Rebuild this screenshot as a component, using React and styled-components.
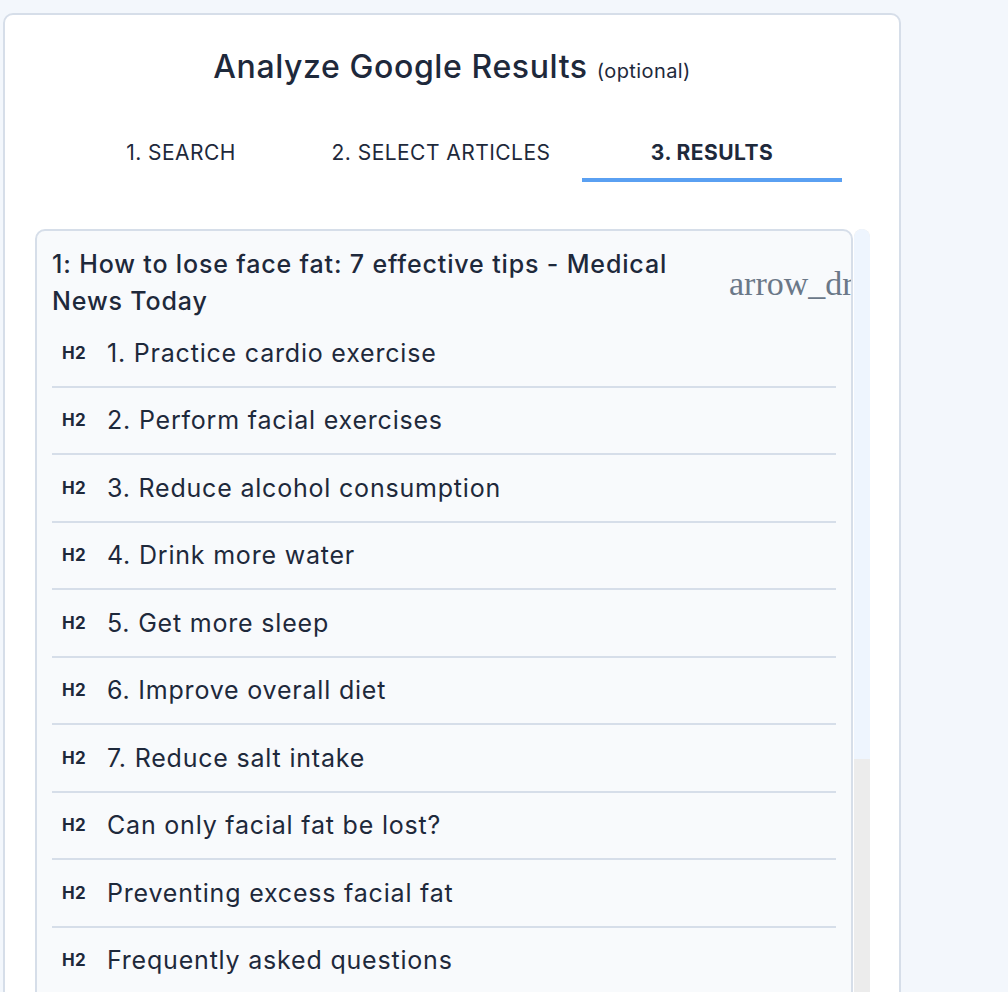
import React from "react";
import styled, { createGlobalStyle } from "styled-components";

const Global = createGlobalStyle`
  html, body { margin: 0; padding: 0; }
  body {
    background: #f3f7fc;
    font-family: "Inter", "Open Sans", sans-serif;
    color: #1e293b;
    overflow: hidden;
  }
`;

const Page = styled.div`
  padding: 13px 0 0 3px;
  height: 979px;
  overflow: hidden;
`;

const Card = styled.div`
  width: 894px;
  background: #ffffff;
  border: 2px solid #d6dee9;
  border-radius: 10px;
  padding-top: 31px;
  box-sizing: content-box;
  height: 1100px;
`;

const TitleRow = styled.h1`
  margin: 0;
  text-align: center;
  font-size: 32px;
  font-weight: 500;
  line-height: 42px;
  letter-spacing: 0.6px;
  color: #1e293b;
`;

const Optional = styled.span`
  font-size: 20px;
  font-weight: 400;
  letter-spacing: 0.4px;
`;

const Tabs = styled.div`
  display: flex;
  width: 780px;
  margin: 47px auto 0;
`;

const Tab = styled.div`
  flex: 0 0 ${(p) => p.$w}px;
  text-align: center;
  font-size: 21px;
  line-height: 28px;
  letter-spacing: 0.45px;
  padding-bottom: 11px;
  text-transform: uppercase;
  font-weight: ${(p) => (p.$active ? 700 : 400)};
  border-bottom: 4px solid ${(p) => (p.$active ? "#5aa0f2" : "transparent")};
  color: #1e293b;
`;

const Content = styled.div`
  display: flex;
  margin: 47px 0 0 30px;
`;

const Panel = styled.div`
  width: 784px;
  height: 900px;
  background: #f8fafc;
  border: 2px solid #d6dee9;
  border-radius: 10px;
  padding: 15px 15px 0 15px;
  overflow: hidden;
  box-sizing: content-box;
`;

const Header = styled.div`
  display: flex;
  align-items: center;
`;

const ArticleTitle = styled.div`
  flex: 0 0 660px;
  font-size: 25px;
  font-weight: 500;
  line-height: 37px;
  letter-spacing: 0.85px;
  color: #1e293b;
`;

const DropIcon = styled.span`
  flex-shrink: 0;
  margin-left: 17px;
  font-family: "Liberation Serif", serif;
  font-size: 34px;
  line-height: 40px;
  color: #6b7888;
  white-space: nowrap;
  margin-top: 2px;
`;

const HeadingRow = styled.div`
  display: flex;
  align-items: center;
  height: 65.5px;
  border-bottom: 2px solid #d6dee9;
  padding-left: 10px;
`;

const Level = styled.span`
  width: 45px;
  flex-shrink: 0;
  font-size: 17px;
  font-weight: 700;
  letter-spacing: 0.4px;
  color: #1e293b;
`;

const HeadingText = styled.span`
  font-size: 25px;
  font-weight: 400;
  letter-spacing: 0.8px;
  color: #1e293b;
`;

const ScrollTrack = styled.div`
  width: 16px;
  margin-left: 1px;
  background: #ececec;
  border-radius: 8px 8px 0 0;
  height: 900px;
  overflow: hidden;
`;

const ScrollThumb = styled.div`
  height: 530px;
  background: #eef5fe;
  border-radius: 8px 8px 0 0;
`;

const headings = [
  "1. Practice cardio exercise",
  "2. Perform facial exercises",
  "3. Reduce alcohol consumption",
  "4. Drink more water",
  "5. Get more sleep",
  "6. Improve overall diet",
  "7. Reduce salt intake",
  "Can only facial fat be lost?",
  "Preventing excess facial fat",
  "Frequently asked questions",
  "How to lose face fat",
];

export default function App() {
  return (
    <>
      <Global />
      <Page>
        <Card>
          <TitleRow>
            Analyze Google Results <Optional>(optional)</Optional>
          </TitleRow>
          <Tabs>
            <Tab $w={238}>1. Search</Tab>
            <Tab $w={282}>2. Select Articles</Tab>
            <Tab $w={260} $active>
              3. Results
            </Tab>
          </Tabs>
          <Content>
            <Panel>
              <Header>
                <ArticleTitle>
                  1: How to lose face fat: 7 effective tips - Medical News Today
                </ArticleTitle>
                <DropIcon>arrow_drop_down</DropIcon>
              </Header>
              {headings.map((h) => (
                <HeadingRow key={h}>
                  <Level>H2</Level>
                  <HeadingText>{h}</HeadingText>
                </HeadingRow>
              ))}
            </Panel>
            <ScrollTrack>
              <ScrollThumb />
            </ScrollTrack>
          </Content>
        </Card>
      </Page>
    </>
  );
}
